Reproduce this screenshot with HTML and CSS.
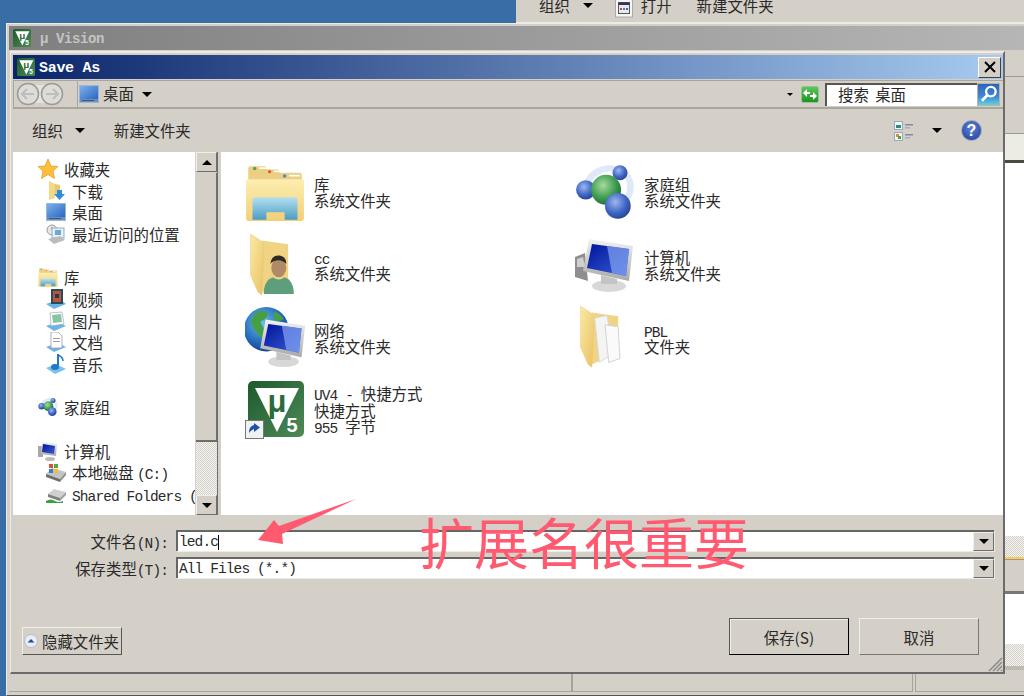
FILE: index.html
```html
<!DOCTYPE html>
<html lang="zh-CN">
<head>
    <meta charset="UTF-8">
    <title>Save As</title>
    <link rel="stylesheet" href="styles.css">
</head>
<body>
    <svg class="defs" xmlns="http://www.w3.org/2000/svg">
        <defs>
            <linearGradient id="gFolder" x1="0" y1="0" x2="0" y2="1"><stop offset="0" stop-color="#fdeeb0"/><stop offset="1" stop-color="#f2cf78"/></linearGradient>
            <linearGradient id="gFlap" x1="0" y1="0" x2="1" y2="1"><stop offset="0" stop-color="#fbe9a6"/><stop offset="1" stop-color="#e9c263"/></linearGradient>
            <linearGradient id="gTray" x1="0" y1="0" x2="0" y2="1"><stop offset="0" stop-color="#b5e0f0"/><stop offset="1" stop-color="#4c9cc2"/></linearGradient>
            <linearGradient id="gGreen" x1="0" y1="0" x2="1" y2="1"><stop offset="0" stop-color="#1c5a2c"/><stop offset="1" stop-color="#4f8a58"/></linearGradient>
            <linearGradient id="gScreen" x1="0" y1="0" x2="1" y2="1"><stop offset="0" stop-color="#00149a"/><stop offset="1" stop-color="#3a5fd8"/></linearGradient>
            <linearGradient id="gBezel" x1="0" y1="0" x2="0" y2="1"><stop offset="0" stop-color="#f2f2f2"/><stop offset="1" stop-color="#a9a9a9"/></linearGradient>
            <linearGradient id="gDesk" x1="0" y1="0" x2="1" y2="1"><stop offset="0" stop-color="#7fb0ea"/><stop offset="1" stop-color="#2a66c4"/></linearGradient>
            <radialGradient id="gBlue" cx=".4" cy=".35" r=".7"><stop offset="0" stop-color="#9cb8ee"/><stop offset=".6" stop-color="#3f66c4"/><stop offset="1" stop-color="#24418f"/></radialGradient>
            <radialGradient id="gBall" cx=".4" cy=".35" r=".7"><stop offset="0" stop-color="#a6dca0"/><stop offset=".6" stop-color="#3f9c50"/><stop offset="1" stop-color="#1f6a38"/></radialGradient>
            <radialGradient id="gGlobe" cx=".4" cy=".35" r=".7"><stop offset="0" stop-color="#6cc0ee"/><stop offset=".7" stop-color="#1f62b4"/><stop offset="1" stop-color="#123e80"/></radialGradient>
            <linearGradient id="gRefresh" x1="0" y1="0" x2="0" y2="1"><stop offset="0" stop-color="#5cc85c"/><stop offset="1" stop-color="#1d921d"/></linearGradient>
        </defs>
        <symbol id="uv" viewBox="0 0 56 56">
            <rect x="0" y="0" width="56" height="56" rx="5" fill="url(#gGreen)"/>
            <polygon points="7,7 51,7 29,51" fill="#fff"/>
            <text x="29" y="31" text-anchor="middle" font-family="Liberation Sans" font-weight="bold" font-size="31" fill="#2d6b3a">μ</text>
            <text x="44" y="51" text-anchor="middle" font-family="Liberation Sans" font-weight="bold" font-size="20" fill="#fff">5</text>
        </symbol>
        <symbol id="library" viewBox="0 0 56 56">
            <path d="M3 6 q0-2 2-2 h14 l2 3 h10 l2 3 h18 q2 0 2 2 v8 H3z" fill="#eccf85"/>
            <circle cx="9" cy="6" r="1.6" fill="#4fa84f"/><rect x="13" y="5" width="10" height="1.5" fill="#fff"/>
            <circle cx="23" cy="9" r="1.6" fill="#e0602c"/><rect x="27" y="8" width="10" height="1.5" fill="#fff"/>
            <circle cx="37" cy="13" r="1.6" fill="#3f8ed0"/><rect x="41" y="12" width="10" height="1.5" fill="#fff"/>
            <rect x="1" y="16" width="54" height="39" rx="2" fill="url(#gFolder)"/>
            <path d="M7 36 q0-3 3-3 h36 q3 0 3 3 v18 H37 v-7 H20 v7 H7z" fill="url(#gTray)"/>
        </symbol>
        <symbol id="foldside" viewBox="0 0 56 66">
            <polygon points="14,7 42,11 42,50 14,62" fill="#f0d483"/>
            <polygon points="2,0 14,8 16,14 14,65 10,62 2,44" fill="url(#gFlap)" stroke="#e3c372" stroke-width=".5"/>
        </symbol>
        <symbol id="monitor" viewBox="0 0 56 56">
            <ellipse cx="30" cy="49" rx="17" ry="6" fill="#d8d8d8"/>
            <polygon points="22,38 38,42 38,47 22,47" fill="#c4c4c4"/>
            <polygon points="10,2 54,9 50,44 4,34" fill="url(#gBezel)"/>
            <polygon points="13,7 50,12 47,39 8,31" fill="url(#gScreen)"/>
            <polygon points="28,9 50,12 47,39 33,36" fill="#7f9ff0" opacity=".75"/>
        </symbol>
        <symbol id="spheres" viewBox="0 0 56 56">
            <path d="M8 30 C12 6 34 0 48 12 C58 26 46 44 30 48" fill="none" stroke="#dfe9f7" stroke-width="6"/>
            <circle cx="42" cy="10" r="7" fill="url(#gBlue)"/>
            <circle cx="10" cy="26" r="9" fill="url(#gBlue)"/>
            <circle cx="29" cy="26" r="14" fill="url(#gBall)"/>
            <circle cx="40" cy="41" r="12" fill="url(#gBlue)"/>
        </symbol>
        <symbol id="desk" viewBox="0 0 20 18">
            <rect x="0" y="0" width="20" height="18" fill="#9ab6d8"/>
            <rect x="1" y="1" width="18" height="13" fill="url(#gDesk)"/>
            <rect x="1" y="14" width="18" height="3" fill="#6d8fb6"/>
            <rect x="3" y="15" width="12" height="1" fill="#2e5a8c"/>
        </symbol>
    </svg>

    <div class="top-bar">
        <span class="top-item">组织</span><span class="arrow top-arrow"></span>
        <svg class="top-icon" viewBox="0 0 18 18"><rect x=".5" y="-1" width="17" height="18" fill="#f6f6f4" stroke="#aaa"/><rect x="3.500" y="2.500" width="11" height="11" fill="#e8e8f0" stroke="#555"/><rect x="3.500" y="2.500" width="11" height="2.500" fill="#34345a"/><rect x="5" y="8" width="2" height="2" fill="#d04040"/><rect x="8" y="8" width="2" height="2" fill="#40a040"/><rect x="11" y="8" width="2" height="2" fill="#4060d0"/></svg>
        <span class="top-item open-item">打开</span><span class="top-item new-item">新建文件夹</span>
    </div>

    <div class="uv-window">
        <div class="uv-title">
            <svg class="title-icon"><use href="#uv"/></svg>
            <span class="uv-name">μ Vision</span>
        </div>
        <div class="uv-body">
            <div class="uv-side">
                <div class="side-a"></div>
                <div class="side-b"></div>
                <div class="side-tab"></div>
                <div class="side-white top-white"></div>
                <div class="side-dither"></div>
                <div class="side-c"></div>
                <div class="side-white low-white"></div>
                <div class="side-dither low-dither"></div>
                <div class="side-d"></div>
            </div>
        </div>
        <div class="uv-status">
            <div class="pane pane-a"></div>
            <div class="pane pane-b"></div>
            <div class="pane pane-c"></div>
        </div>
    </div>

    <div class="dialog">
        <div class="dlg-title">
            <svg class="title-icon"><use href="#uv"/></svg>
            <span class="dlg-name">Save As</span>
            <button class="close-btn">
                <svg viewBox="0 0 12 12" width="12" height="12"><path d="M1 1 L11 11 M11 1 L1 11" stroke="#000" stroke-width="2"/></svg>
            </button>
        </div>

        <div class="address-row">
            <svg class="nav-btns" viewBox="0 0 48 24">
                <rect x="8" y="3" width="32" height="18" fill="#e6e4de"/>
                <circle cx="12" cy="12" r="10.5" fill="#dedcd6" stroke="#9a9a9a" stroke-width="1.5"/>
                <circle cx="36" cy="12" r="10.5" fill="#dedcd6" stroke="#9a9a9a" stroke-width="1.5"/>
                <path d="M18 12 H7 M11 7 L6 12 L11 17" fill="none" stroke="#bdbdbd" stroke-width="2"/>
                <path d="M30 12 H41 M37 7 L42 12 L37 17" fill="none" stroke="#bdbdbd" stroke-width="2"/>
            </svg>
            <div class="crumb">
                <svg class="crumb-icon"><use href="#desk"/></svg>
                <span class="crumb-text">桌面</span>
                <span class="arrow crumb-arrow"></span>
                <span class="arrow small-arrow"></span>
                <svg class="refresh" viewBox="0 0 18 17"><rect x=".5" y=".5" width="17" height="16" rx="2" fill="url(#gRefresh)" stroke="#9abf9a"/><path d="M2 7 L6 3 V6 H9 V8 H6 V11z M16 10 L12 14 V11 H9 V9 H12 V6z" fill="#fff"/></svg>
            </div>
            <div class="search-box">搜索 桌面</div>
            <button class="search-btn">
                <svg viewBox="0 0 22 22" width="22" height="22"><circle cx="13.5" cy="8.5" r="5" fill="none" stroke="#fff" stroke-width="2.4"/><path d="M10 12 L4 18" stroke="#fff" stroke-width="3"/></svg>
            </button>
        </div>

        <div class="toolbar">
            <span class="tool-text">组织</span><span class="arrow org-arrow"></span>
            <span class="tool-text new-folder">新建文件夹</span>
            <div class="tool-right">
                <svg class="view-icon" viewBox="0 0 20 20"><rect x=".5" y=".5" width="8" height="8" fill="#eef4fa" stroke="#9ab"/><rect x="2" y="4" width="5" height="3" fill="#2f8a7a"/><rect x="11" y="3" width="8" height="1.5" fill="#889"/><rect x="11" y="6" width="5" height="1.5" fill="#aab"/><rect x=".5" y="11.5" width="8" height="8" fill="#eef4fa" stroke="#9ab"/><rect x="2" y="13" width="3" height="3" fill="#d89030"/><rect x="4" y="15" width="3" height="3" fill="#50a040"/><rect x="11" y="13" width="8" height="1.5" fill="#889"/><rect x="11" y="16" width="5" height="1.5" fill="#aab"/></svg>
                <span class="arrow view-arrow"></span>
                <div class="help-btn">?</div>
            </div>
        </div>

        <div class="content">
            <nav class="nav-pane">
                <div class="nav-row">
                    <svg class="nav-icon" viewBox="0 0 20 20"><polygon points="10,0 13,7 20,7.5 15,12 16.5,19.5 10,15.5 3.5,19.5 5,12 0,7.5 7,7" fill="#fbbf3c" stroke="#ef9a2a" stroke-width=".8"/></svg><span>收藏夹</span>
                </div>
                <div class="nav-row sub">
                    <svg class="nav-icon" viewBox="0 0 20 20"><polygon points="3,0 9,3 9,17 3,19" fill="#f3d987"/><polygon points="9,3 14,4 14,10 9,14" fill="#e9c76c"/><path d="M11 9 h5 v4 h3 l-5.500 6 l-5.500-6 h3z" fill="#2f8fd6"/></svg><span>下载</span>
                </div>
                <div class="nav-row sub">
                    <svg class="nav-icon"><use href="#desk"/></svg><span>桌面</span>
                </div>
                <div class="nav-row sub">
                    <svg class="nav-icon" viewBox="0 0 20 20"><circle cx="6" cy="6" r="5" fill="#e8e8e8" stroke="#9a9a9a"/><path d="M6 3 V6 H9" fill="none" stroke="#888"/><rect x="6" y="4" width="12" height="10" fill="#e8f0f8" stroke="#9ab"/><rect x="9" y="6" width="6" height="5" fill="#6aa8d8"/><polygon points="2,15 14,12 19,16 8,20" fill="#bcbcbc"/></svg><span>最近访问的位置</span>
                </div>

                <div class="nav-row group">
                    <svg class="nav-icon"><use href="#library"/></svg><span>库</span>
                </div>
                <div class="nav-row sub">
                    <svg class="nav-icon" viewBox="0 0 20 20"><polygon points="0,15 14,10 20,15 8,20" fill="#6ab4e8"/><rect x="5" y="0" width="12" height="15" fill="#30485c"/><rect x="7" y="2" width="8" height="11" fill="#b4583a"/><rect x="9" y="5" width="4" height="4" fill="#28384a"/></svg><span>视频</span>
                </div>
                <div class="nav-row sub">
                    <svg class="nav-icon" viewBox="0 0 20 20"><polygon points="0,15 12,11 20,15 8,20" fill="#6ab4e8"/><polygon points="4,2 16,1 18,13 5,15" fill="#fff" stroke="#9ab" stroke-width=".7"/><polygon points="6,4 15,3 16,11 7,12" fill="#8ac4a0"/></svg><span>图片</span>
                </div>
                <div class="nav-row sub">
                    <svg class="nav-icon" viewBox="0 0 20 20"><polygon points="0,15 12,11 20,15 8,20" fill="#6ab4e8"/><polygon points="5,0 12,0 16,4 16,16 5,16" fill="#fff" stroke="#99a" stroke-width=".8"/><rect x="7" y="6" width="7" height="1" fill="#99a"/><rect x="7" y="9" width="7" height="1" fill="#99a"/></svg><span>文档</span>
                </div>
                <div class="nav-row sub">
                    <svg class="nav-icon" viewBox="0 0 20 20"><polygon points="0,14 10,10 20,15 9,20" fill="#7cc0ec"/><path d="M12 0 V12" stroke="#1f78c8" stroke-width="2"/><path d="M12 1 q5 2 5 6" fill="none" stroke="#1f78c8" stroke-width="1.500"/><ellipse cx="9" cy="13" rx="4" ry="3" fill="#1f78c8"/></svg><span>音乐</span>
                </div>

                <div class="nav-row group">
                    <svg class="nav-icon"><use href="#spheres"/></svg><span>家庭组</span>
                </div>

                <div class="nav-row group">
                    <svg class="nav-icon" viewBox="0 0 20 20"><rect x="0" y="5" width="5" height="11" fill="#a8a8a8"/><polygon points="4,1 19,3 18,15 3,13" fill="url(#gBezel)"/><polygon points="5,3 17,5 16,13 4,11" fill="url(#gScreen)"/><ellipse cx="12" cy="18" rx="5" ry="2" fill="#bbb"/></svg><span>计算机</span>
                </div>
                <div class="nav-row sub">
                    <svg class="nav-icon" viewBox="0 0 20 20"><polygon points="0,12 6,6 20,10 14,17" fill="#c4c4c4"/><polygon points="0,12 14,17 14,20 0,15" fill="#6e6e6e"/><polygon points="14,17 20,10 20,13 14,20" fill="#8e8e8e"/><rect x="3" y="2" width="4" height="4" fill="#e0502c"/><rect x="8" y="2" width="4" height="4" fill="#58a83c"/><rect x="3" y="7" width="4" height="4" fill="#3a7ad0"/><rect x="8" y="7" width="4" height="4" fill="#f0c030"/></svg><span>本地磁盘 <span class="mono">(C:)</span></span>
                </div>
                <div class="nav-row sub">
                    <svg class="nav-icon" viewBox="0 0 20 20"><polygon points="2,10 8,5 20,8 14,14" fill="#d0d0d0"/><polygon points="2,10 14,14 14,17 2,13" fill="#808080"/><polygon points="14,14 20,8 20,11 14,17" fill="#a0a0a0"/><path d="M0 17 q5-3 9 0 q4 2 8 0 v2 H0z" fill="#3aa040"/></svg><span class="mono shared">Shared Folders (</span>
                </div>
            </nav>

            <div class="scrollbar">
                <div class="sb-btn"><span class="sb-up"></span></div>
                <div class="sb-thumb"></div>
                <div class="sb-track"></div>
                <div class="sb-btn"><span class="sb-down"></span></div>
            </div>

            <div class="file-list">
                <div class="file">
                    <svg class="file-icon"><use href="#library"/></svg>
                    <div class="file-text"><div>库</div><div>系统文件夹</div></div>
                </div>
                <div class="file">
                    <svg class="file-icon"><use href="#spheres"/></svg>
                    <div class="file-text"><div>家庭组</div><div>系统文件夹</div></div>
                </div>
                <div class="file">
                    <svg class="file-icon" viewBox="0 0 56 66">
                        <use href="#foldside" width="56" height="66"/>
                        <path d="M16 64 q0-15 10-18 q6 5 12 0 q10 3 10 18z" fill="#5f9e7c"/>
                        <ellipse cx="32" cy="36" rx="8" ry="10" fill="#b08a68"/>
                        <path d="M23 32 q1-10 10-9 q7 1 7 9 q-4-4-8-4 q-6 0-9 4z" fill="#2e2a26"/>
                    </svg>
                    <div class="file-text"><div><span class="mono">cc</span></div><div>系统文件夹</div></div>
                </div>
                <div class="file">
                    <svg class="file-icon" viewBox="0 0 60 56">
                        <polygon points="0,20 10,16 13,44 0,40" fill="#8e8e8e"/>
                        <polygon points="2,22 8,20 10,30 2,30" fill="#cfcfcf"/>
                        <use href="#monitor" x="4" y="0" width="56" height="56"/>
                    </svg>
                    <div class="file-text"><div>计算机</div><div>系统文件夹</div></div>
                </div>
                <div class="file">
                    <svg class="file-icon" viewBox="0 0 62 64">
                        <circle cx="22" cy="24" r="23" fill="url(#gGlobe)"/>
                        <path d="M10 8 q8-6 14 0 q-2 6-8 8 q2 8 6 10 q-2 8-6 6 q-8-8-10-16z M30 6 q8 2 10 8 l-10 2z" fill="#45a045"/>
                        <use href="#monitor" x="12" y="12" width="52" height="52"/>
                    </svg>
                    <div class="file-text lower"><div>网络</div><div>系统文件夹</div></div>
                </div>
                <div class="file">
                    <svg class="file-icon" viewBox="0 0 56 66">
                        <use href="#foldside" width="56" height="66"/>
                        <polygon points="17,13 30,10 38,50 22,60" fill="#f4f4f2" stroke="#d6d6d4"/>
                        <polygon points="28,20 42,22 44,56 32,60" fill="#fafafa" stroke="#d0d0ce"/>
                        <polygon points="2,0 14,8 16,14 14,65 10,62 2,44" fill="url(#gFlap)"/>
                    </svg>
                    <div class="file-text lower"><div><span class="mono">PBL</span></div><div>文件夹</div></div>
                </div>
                <div class="file">
                    <svg class="file-icon" viewBox="0 0 60 60">
                        <use href="#uv" x="3" y="1" width="56" height="56"/>
                        <rect x=".5" y="40.500" width="18" height="18" fill="#eef2f2" stroke="#777"/>
                        <path d="M4 53 q0-7 5-8 v-2 l6 4.500 l-6 4.500 v-3 q-3 1-5 4z" fill="#1f4fa8"/>
                    </svg>
                    <div class="file-text three"><div><span class="mono">UV4 - </span>快捷方式</div><div>快捷方式</div><div><span class="mono">955 </span>字节</div></div>
                </div>
            </div>
        </div>

        <div class="form-row first">
            <label class="form-label">文件名<span class="mono">(N):</span></label>
            <div class="combo">
                <div class="combo-value mono">led.c<span class="caret"></span></div>
                <div class="combo-btn"><span class="sb-down"></span></div>
            </div>
        </div>
        <div class="form-row">
            <label class="form-label">保存类型<span class="mono">(T):</span></label>
            <div class="combo">
                <div class="combo-value mono">All Files (*.*)</div>
                <div class="combo-btn"><span class="sb-down"></span></div>
            </div>
        </div>

        <div class="actions">
            <button class="hide-btn">
                <svg viewBox="0 0 14 14" width="14" height="14"><circle cx="7" cy="7" r="6.500" fill="#e8eef6" stroke="#b4bccc"/><path d="M3.500 8.500 L7 5 L10.500 8.500z" fill="#2a4a90"/></svg>
                隐藏文件夹
            </button>
            <div class="action-right">
                <button class="btn btn-default">保存(S)</button>
                <button class="btn">取消</button>
            </div>
        </div>

        <svg class="grip" viewBox="0 0 16 16"><path d="M15 2 L2 15 M15 6 L6 15 M15 10 L10 15 M15 14 L14 15" stroke="#8a8a8a" stroke-width="1.500"/></svg>
    </div>

    <svg class="note-arrow" viewBox="0 0 110 50"><polygon points="2,44 18,24 23,30 100,3 26,38 27,48" fill="#ff5a70"/></svg>
    <div class="note-text">扩展名很重要</div>
</body>
</html>
```

FILE: styles.css
```css
* {
    box-sizing: border-box;
}
body {
    margin: 0;
    width: 1024px;
    height: 696px;
    overflow: hidden;
    position: relative;
    background-color: #386da6;
    font-family: "Noto Sans CJK SC", sans-serif;
    font-size: 15.4px;
    color: #2a2a2a;
}
button {
    font-family: inherit;
    font-size: inherit;
    color: inherit;
    padding: 0;
}
.defs {
    display: block;
    width: 0;
    height: 0;
}
.mono {
    font-family: "Liberation Mono", monospace;
    font-size: 14.5px;
    letter-spacing: -.9px;
}
.shared {
    margin-top: 5px;
}
.arrow {
    display: inline-block;
    width: 0;
    height: 0;
    border-left: 5px solid transparent;
    border-right: 5px solid transparent;
    border-top: 5px solid #000;
}

/* window behind, top edge only */
.top-bar {
    position: absolute;
    left: 516px;
    top: 0;
    right: 0;
    height: 24px;
    display: flex;
    align-items: center;
    padding: 0 0 12px 23px;
    background-color: #d4d0c8;
    border-bottom: 2px solid #ecebe6;
}
.top-item {
    white-space: nowrap;
}
.top-arrow {
    margin-left: 13px;
}
.top-icon {
    width: 18px;
    height: 18px;
    margin-left: 22px;
    align-self: flex-start;
    flex: none;
}
.open-item {
    margin-left: 8px;
}
.new-item {
    margin-left: 25px;
}

/* uVision main window */
.uv-window {
    position: absolute;
    left: 6px;
    top: 23px;
    right: -4px;
    height: 673px;
    display: flex;
    flex-direction: column;
    background-color: #d4d0c8;
    border: 1px solid #ecebe6;
    border-bottom: 1px solid #555;
    padding: 2px 0 0 2px;
}
.uv-title {
    height: 24px;
    flex: none;
    display: flex;
    align-items: center;
    padding-left: 4px;
    background: linear-gradient(to right, #7f7f7f, #b6b6b6);
}
.title-icon {
    width: 18px;
    height: 18px;
    flex: none;
}
.uv-name {
    margin: 2px 0 0 9px;
    font-family: "Liberation Mono", monospace;
    font-weight: bold;
    font-size: 14px;
    letter-spacing: -.4px;
    color: #c4c4c4;
}
.uv-body {
    flex: 1;
    display: flex;
    justify-content: flex-end;
}
.uv-side {
    width: 23px;
    display: flex;
    flex-direction: column;
}
.side-a {
    height: 27px;
    border-bottom: 1px solid #9a9a9a;
}
.side-b {
    height: 57px;
    border-bottom: 1px solid #999;
}
.side-tab {
    height: 29px;
    background-color: #ecebe4;
    border-bottom: 3px solid #4a4a40;
}
.top-white {
    height: 373px;
    background-color: #fff;
}
.side-dither {
    height: 23px;
    background: repeating-conic-gradient(#f4f4f2 0 25%, #d4d0c8 0 50%) 0 0 / 2px 2px;
    border-bottom: 2px solid #ffc94d;
}
.side-c {
    height: 35px;
    border-top: 1px solid #999;
    border-bottom: 3px solid #777;
}
.low-white {
    height: 50px;
    background-color: #fff;
}
.low-dither {
    height: 22px;
    border-bottom: none;
}
.side-d {
    height: 4px;
    background-color: #bdbab2;
}
.uv-status {
    height: 21px;
    flex: none;
    display: flex;
    padding-bottom: 2px;
}
.pane {
    border: 1px solid #a6a39c;
    border-top: none;
    height: 18px;
}
.pane-a {
    width: 563px;
    border-left: none;
}
.pane-b {
    width: 341px;
    margin-right: 2px;
}
.pane-c {
    flex: 1;
}

/* Save As dialog */
.dialog {
    position: absolute;
    left: 10px;
    top: 51px;
    width: 995px;
    height: 623px;
    background-color: #d4d0c8;
    border-top: 2px solid #ecebe6;
    border-left: 1px solid #ecebe6;
    border-right: 2px solid #6b6b6b;
    border-bottom: 2px solid #6b6b6b;
    padding: 2px 0 0 2px;
}
.dlg-title {
    height: 24px;
    display: flex;
    align-items: center;
    padding-left: 4px;
    background: linear-gradient(to right, #0a246a, #a6caf0);
}
.dlg-name {
    margin: 2px 0 0 4px;
    font-family: "Liberation Mono", monospace;
    font-weight: bold;
    font-size: 15px;
    letter-spacing: -.3px;
    color: #fff;
}
.close-btn {
    margin-left: auto;
    margin-right: 2px;
    width: 23px;
    height: 21px;
    display: flex;
    align-items: center;
    justify-content: center;
    background-color: #d4d0c8;
    border: 1px solid;
    border-color: #fff #404040 #404040 #fff;
}
.address-row {
    height: 29px;
    margin-top: 1px;
    display: flex;
    align-items: center;
    border-top: 1px solid #a9a6a0;
    border-left: 1px solid #a9a6a0;
    border-bottom: 2px solid #a9a6a0;
    padding-right: 3px;
}
.nav-btns {
    width: 48px;
    height: 24px;
    margin-left: 2px;
    flex: none;
}
.crumb {
    flex: 1;
    height: 100%;
    margin-left: 13px;
    border-left: 1px solid #a9a6a0;
    display: flex;
    align-items: center;
}
.crumb-icon {
    width: 20px;
    height: 18px;
    margin-left: 1px;
    flex: none;
}
.crumb-text {
    margin: -2px 0 0 4px;
}
.crumb-arrow {
    margin-left: 8px;
}
.small-arrow {
    margin-left: auto;
    border-left-width: 3px;
    border-right-width: 3px;
    border-top-width: 3px;
}
.refresh {
    width: 18px;
    height: 17px;
    margin: 0 6px 0 8px;
    flex: none;
}
.search-box {
    width: 152px;
    height: 23px;
    padding-left: 11px;
    line-height: 19px;
    word-spacing: 3px;
    background-color: #fff;
    border-top: 2px solid #555;
    border-left: 2px solid #555;
    white-space: nowrap;
}
.search-btn {
    width: 23px;
    height: 23px;
    flex: none;
    display: flex;
    align-items: center;
    justify-content: center;
    background: linear-gradient(#2f62c0, #3f8ad0 60%, #62cfe0);
    border: 1px solid #b7b4ac;
}
.toolbar {
    height: 43px;
    display: flex;
    align-items: center;
    padding-left: 19px;
}
.tool-text {
    margin-top: -2px;
    white-space: nowrap;
}
.org-arrow {
    margin-left: 12px;
}
.new-folder {
    margin-left: 29px;
}
.tool-right {
    margin-left: auto;
    display: flex;
    align-items: center;
    padding-right: 21px;
}
.view-icon {
    width: 20px;
    height: 20px;
}
.view-arrow {
    margin-left: 18px;
}
.help-btn {
    width: 21px;
    height: 21px;
    margin-left: 19px;
    border-radius: 50%;
    background: radial-gradient(circle at 50% 35%, #5f82d8, #1c3f96);
    border: 1px solid #9da6b8;
    color: #fff;
    font-family: "Liberation Sans", sans-serif;
    font-weight: bold;
    font-size: 16px;
    line-height: 19px;
    text-align: center;
}
.content {
    height: 363px;
    display: flex;
}
.nav-pane {
    width: 182px;
    flex: none;
    overflow: hidden;
    background-color: #fff;
    padding-top: 6px;
}
.nav-row {
    height: 21.7px;
    display: flex;
    align-items: center;
    gap: 6px;
    padding-left: 25px;
    white-space: nowrap;
}
.nav-row.sub {
    padding-left: 33px;
}
.nav-row.group {
    margin-top: 21.7px;
}
.nav-icon {
    width: 20px;
    height: 20px;
    flex: none;
}
.scrollbar {
    width: 22px;
    margin-left: 1px;
    flex: none;
    display: flex;
    flex-direction: column;
    border-right: 1px solid #6e6e6e;
}
.sb-btn {
    height: 20px;
    flex: none;
    display: flex;
    align-items: center;
    justify-content: center;
    background-color: #d4d0c8;
    border: 1px solid;
    border-color: #f0efea #6e6e6e #6e6e6e #f0efea;
}
.sb-up, .sb-down {
    width: 0;
    height: 0;
    border-left: 5px solid transparent;
    border-right: 5px solid transparent;
}
.sb-up {
    border-bottom: 5px solid #000;
}
.sb-down {
    border-top: 5px solid #000;
}
.sb-thumb {
    height: 269px;
    flex: none;
    margin-top: 1px;
    background-color: #d4d0c8;
    border-right: 1px solid #6e6e6e;
    border-bottom: 2px solid #6e6e6e;
}
.sb-track {
    flex: 1;
    background: repeating-conic-gradient(#f4f4f2 0 25%, #d4d0c8 0 50%) 0 0 / 2px 2px;
}
.file-list {
    flex: 1;
    margin-left: 3px;
    background-color: #fff;
    display: grid;
    grid-template-columns: 330px 1fr;
    grid-auto-rows: 72.5px;
    padding: 4px 0 0 24px;
}
.file {
    display: flex;
    align-items: center;
    gap: 9px;
}
.file-icon {
    width: 60px;
    height: 62px;
    flex: none;
}
.file-text {
    line-height: 16px;
    white-space: pre;
}
.file-text.lower {
    padding-top: 2px;
}
.file-text div {
    height: 16px;
}
.file-text.three div {
    height: 16.5px;
}
.form-row {
    display: flex;
    align-items: center;
    height: 21px;
    margin-top: 6px;
}
.form-row.first {
    margin-top: 15px;
}
.form-label {
    width: 155px;
    text-align: right;
    margin-right: 8px;
    flex: none;
    white-space: nowrap;
}
.combo {
    width: 818px;
    height: 100%;
    display: flex;
    background-color: #fff;
    border-top: 2px solid #666;
    border-left: 2px solid #666;
    box-shadow: 1px 1px 0 #ecebe6;
}
.combo-value {
    flex: 1;
    padding: 2px 0 0 1px;
    line-height: 19px;
    display: flex;
    align-items: center;
}
.caret {
    width: 1px;
    height: 15px;
    background-color: #000;
}
.combo-btn {
    width: 21px;
    display: flex;
    align-items: center;
    justify-content: center;
    background-color: #d4d0c8;
    border: 1px solid;
    border-color: #f0efea #6e6e6e #6e6e6e #f0efea;
}
.actions {
    margin-top: 40px;
    display: flex;
    align-items: flex-end;
    justify-content: space-between;
    padding: 0 24px 0 9px;
}
.hide-btn {
    width: 100px;
    height: 28px;
    display: flex;
    align-items: center;
    gap: 4px;
    padding-left: 1px;
    white-space: nowrap;
    background-color: #d4d0c8;
    border: 1px solid;
    border-color: #f0efea #555 #555 #f0efea;
}
.action-right {
    display: flex;
    gap: 10px;
}
.btn {
    width: 120px;
    height: 37px;
    background-color: #d4d0c8;
    border: 1px solid;
    border-color: #f0efea #777 #777 #f0efea;
}
.btn-default {
    border-color: #555 #000 #000 #555;
    box-shadow: inset 1px 1px 0 #f0efea;
}
.grip {
    position: absolute;
    right: 0;
    bottom: 0;
    width: 16px;
    height: 16px;
}

/* pink annotation on top of the screenshot */
.note-arrow {
    position: absolute;
    left: 256px;
    top: 496px;
    width: 110px;
    height: 50px;
}
.note-text {
    position: absolute;
    left: 419px;
    top: 500px;
    font-size: 55px;
    line-height: 80px;
    color: #ff5a70;
    white-space: nowrap;
}
```
